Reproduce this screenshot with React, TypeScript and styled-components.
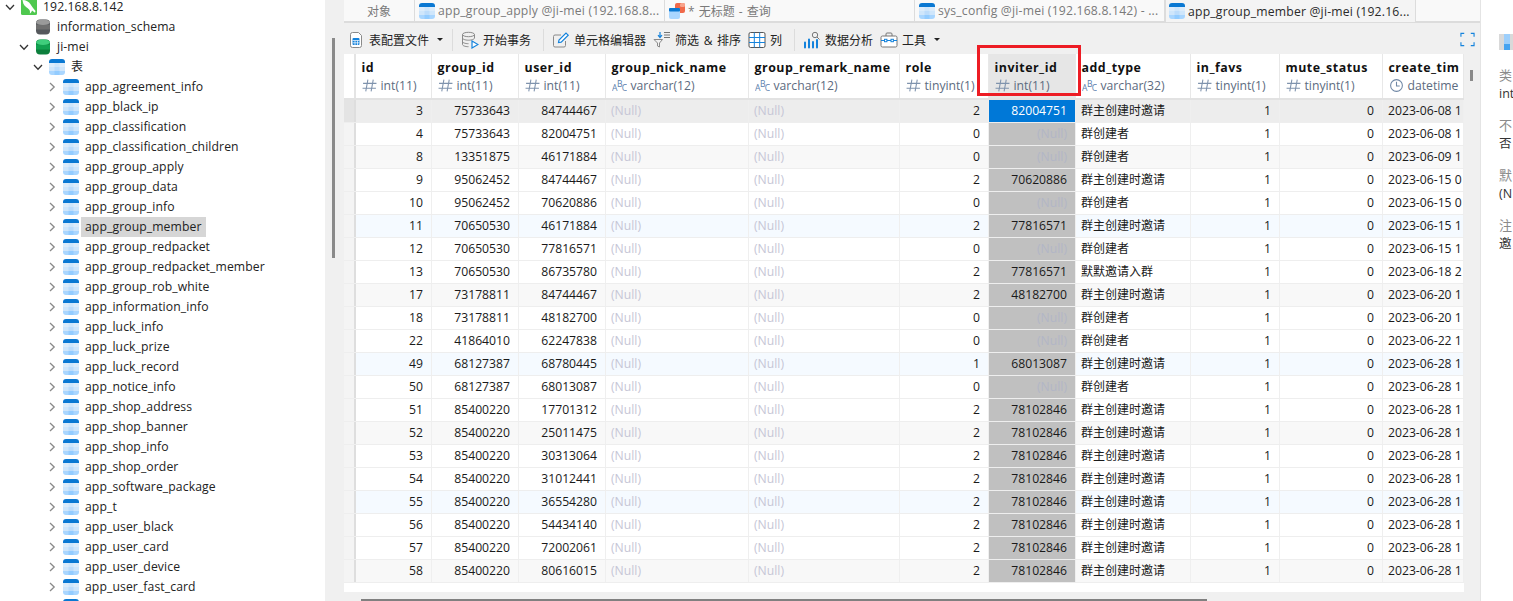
import React from "react";
import styled, { createGlobalStyle } from "styled-components";

const FONT = `"Open Sans", "Noto Sans", "Noto Sans CJK SC", sans-serif`;
const COLS = "12px 76px 87px 87px 143px 151px 89px 87px 115px 89px 103px 81px";

const Global = createGlobalStyle`
  html, body { margin: 0; padding: 0; height: 601px; overflow: hidden; background: #fff; }
  body { font-family: ${FONT}; font-size: 12.2px; color: #1a1a1a; }
`;

const Page = styled.div`
  display: flex;
  width: 1513px;
  height: 601px;
  overflow: hidden;
`;

/* ---------- sidebar ---------- */
const Sidebar = styled.nav`
  width: 325px;
  height: 601px;
  overflow: hidden;
  flex: none;
  background: #fff;
`;
const Tree = styled.ul`
  list-style: none;
  margin: -3px 0 0;
  padding: 0;
`;
const TreeRow = styled.li<{ $depth: number }>`
  display: flex;
  align-items: center;
  height: 20px;
  padding-left: ${(p) => 5 + p.$depth * 14}px;
  color: #222;
  white-space: nowrap;
  letter-spacing: 0.1px;
`;
const Chevron = styled.svg`
  width: 10px;
  height: 10px;
  flex: none;
  margin-right: 6px;
`;
const NoChevron = styled.span`
  width: 16px;
  flex: none;
`;
const NodeIcon = styled.svg`
  width: 16px;
  height: 16px;
  flex: none;
`;
const NodeLabel = styled.span<{ $selected?: boolean }>`
  margin-left: 2px;
  padding: 0 4px;
  height: 20px;
  line-height: 19px;
  background: ${(p) => (p.$selected ? "#d6d6d6" : "transparent")};
`;
const CjkLabel = styled.span`
  font-size: 12px;
`;
const SideGutter = styled.div`
  width: 19px;
  flex: none;
  background: #f0f0f0;
  padding: 38px 0 0 7px;
  box-sizing: border-box;
`;
const SideThumb = styled.div`
  width: 3px;
  height: 220px;
  background: #8a8a8a;
`;

/* ---------- main ---------- */
const Main = styled.main`
  width: 1136px;
  flex: none;
  display: flex;
  flex-direction: column;
  background: #f0f0f0;
`;
const TabBar = styled.div`
  display: flex;
  height: 23px;
  box-sizing: border-box;
  background: #f9f9f9;
  border-bottom: 2px solid #dcdcdc;
  flex: none;
`;
const Tab = styled.div<{ $w: number; $active?: boolean; $plain?: boolean }>`
  width: ${(p) => p.$w}px;
  height: ${(p) => (p.$active ? 22 : 21)}px;
  flex: none;
  box-sizing: border-box;
  display: flex;
  align-items: center;
  justify-content: ${(p) => (p.$plain ? "center" : "flex-start")};
  gap: 3px;
  padding-left: ${(p) => (p.$plain ? 0 : p.$active ? 3 : 4)}px;
  border-right: 1px solid #dcdcdc;
  white-space: nowrap;
  overflow: hidden;
  color: ${(p) => (p.$active ? "#2a2a2a" : "#7a7a7a")};
  background: ${(p) => (p.$active ? "#f4f4f4" : "transparent")};
  ${(p) => (p.$active ? "border-left: 1px solid #dcdcdc;" : "")}
  letter-spacing: 0.2px;
`;
const TabCjk = styled.span`
  font-size: 12px;
  letter-spacing: 0;
  word-spacing: 1px;
`;
const Toolbar = styled.div`
  height: 31px;
  flex: none;
  display: flex;
  align-items: center;
  padding: 2px 5px 0 3px;
  box-sizing: border-box;
  font-size: 12px;
  color: #222;
`;
const Tool = styled.div<{ $ml?: number }>`
  display: flex;
  align-items: center;
  gap: 4px;
  margin-left: ${(p) => p.$ml ?? 0}px;
  white-space: nowrap;
`;
const WideWords = styled.span`
  word-spacing: 1.5px;
`;
const Caret = styled.span`
  width: 0;
  height: 0;
  margin-left: 4px;
  border-left: 3px solid transparent;
  border-right: 3px solid transparent;
  border-top: 3px solid #222;
`;
const Sep = styled.div<{ $ml: number }>`
  width: 1px;
  height: 22px;
  margin-left: ${(p) => p.$ml}px;
  background: #dcdcdc;
`;
const ToolIcon = styled.svg`
  width: 18px;
  height: 18px;
  flex: none;
`;
const Expand = styled.svg`
  width: 15px;
  height: 15px;
  margin-left: auto;
`;

const GridRegion = styled.div`
  display: flex;
  height: 538px;
  flex: none;
`;
const Grid = styled.div`
  width: 1120px;
  background: #fff;
  flex: none;
  overflow: hidden;
`;
const VGutter = styled.div`
  width: 16px;
  flex: none;
  padding: 16px 0 0 6px;
  box-sizing: border-box;
`;
const VThumb = styled.div`
  width: 3px;
  height: 11px;
  background: #8a8a8a;
`;
const HeaderRow = styled.div`
  display: grid;
  grid-template-columns: ${COLS};
  height: 46px;
  box-sizing: border-box;
  border-bottom: 2px solid #e2e2e2;
`;
const HeaderCell = styled.div<{ $active?: boolean }>`
  box-sizing: border-box;
  padding: 5.5px 0 0 5.5px;
  border-right: 1px solid #e8e8e8;
  overflow: hidden;
  white-space: nowrap;
  background: ${(p) => (p.$active ? "#e6e6e6" : "#fff")};
`;
const Corner = styled.div`
  border-right: 2px solid #e4e4e4;
  background: #fff;
`;
const ColName = styled.div`
  font-weight: 700;
  font-size: 12.4px;
  line-height: 16px;
  color: #111;
  letter-spacing: 0.5px;
`;
const ColType = styled.div`
  display: flex;
  align-items: center;
  gap: 4px;
  height: 20px;
  color: #5d6b80;
  font-size: 12.2px;
`;
const TypeIcon = styled.svg`
  width: 15px;
  height: 15px;
  flex: none;
`;
const BodyRow = styled.div<{ $tone: string }>`
  display: grid;
  grid-template-columns: ${COLS};
  height: 23px;
  box-sizing: border-box;
  border-bottom: 1px solid #eeeeee;
  background: ${(p) => p.$tone};
`;
const Indicator = styled.div<{ $on?: boolean }>`
  background: ${(p) => (p.$on ? "#e4e4e4" : "#f4f4f4")};
  border-right: 2px solid #dedede;
`;
const Cell = styled.div<{ $right?: boolean; $mode?: "hl" | "sel" }>`
  box-sizing: border-box;
  line-height: 21px;
  height: 22px;
  padding: ${(p) => (p.$right ? "0 8px 0 0" : "0 0 0 5px")};
  text-align: ${(p) => (p.$right ? "right" : "left")};
  border-right: 1px solid #efefef;
  overflow: hidden;
  white-space: nowrap;
  color: ${(p) => (p.$mode === "sel" ? "#fff" : "#1a1a1a")};
  background: ${(p) =>
    p.$mode === "sel" ? "#0078d7" : p.$mode === "hl" ? "#c0c0c0" : "transparent"};
`;
const CjkCell = styled(Cell)`
  font-size: 12px;
`;
const NullText = styled.span<{ $hl?: boolean }>`
  color: ${(p) => (p.$hl ? "#b2b6c6" : "#c6c6d6")};
`;
const HTrack = styled.div`
  flex: 1;
  padding: 7px 0 0 17px;
`;
const HThumb = styled.div`
  width: 846px;
  height: 3px;
  background: #808080;
`;

/* ---------- right panel ---------- */
const Info = styled.aside`
  width: 33px;
  flex: none;
  overflow: hidden;
  background: #fff;
  border-left: 1px solid #e4e4e4;
  box-sizing: border-box;
  padding: 34px 0 0 18px;
  white-space: nowrap;
  font-size: 12.5px;
`;
const InfoIcon = styled.svg`
  width: 16px;
  height: 16px;
  display: block;
  margin-bottom: 15px;
`;
const InfoGroup = styled.div`
  margin-bottom: 12px;
`;
const InfoKey = styled.div`
  color: #8a8a8a;
  line-height: 20px;
  font-size: 13px;
`;
const InfoVal = styled.div`
  color: #333;
  line-height: 18px;
`;

const Annotation = styled.div`
  position: absolute;
  left: 977px;
  top: 45px;
  width: 104px;
  height: 51px;
  box-sizing: border-box;
  border: 3px solid #ed1c24;
  pointer-events: none;
`;

/* ---------- drawings ---------- */
const TableGlyph = () => (
  <NodeIcon viewBox="0 0 16 16">
    <defs>
      <clipPath id="tbl-clip">
        <rect x="0" y="0" width="16" height="16" rx="3" />
      </clipPath>
    </defs>
    <g clipPath="url(#tbl-clip)">
      <rect width="16" height="4" fill="#0a78d2" />
      <rect y="4" width="16" height="4" fill="#dcecfb" />
      <rect x="5.500" y="4" width="5" height="4" fill="#cfe6fb" />
      <rect y="8" width="16" height="4" fill="#cfe6fb" />
      <rect x="5.500" y="8" width="5" height="4" fill="#bcdcfb" />
      <rect y="12" width="16" height="4" fill="#a9d6ff" />
      <rect x="5.500" y="12" width="5" height="4" fill="#93ccff" />
    </g>
  </NodeIcon>
);

const Db = ({ a, b, c }: { a: string; b: string; c: string }) => (
  <NodeIcon viewBox="0 0 16 16">
    <rect x="1" y="0.500" width="14" height="15" rx="4" fill={c} />
    <rect x="1" y="5.500" width="14" height="5" fill={b} />
    <ellipse cx="8" cy="3.300" rx="7" ry="2.800" fill={a} />
  </NodeIcon>
);

const Mysql = () => (
  <NodeIcon viewBox="0 0 16 16">
    <rect width="16" height="16" rx="1.500" fill="#4fc84f" />
    <path
      d="M1.500 1c3.500.2 6.500 1.500 8 4.200 1 1.800 2.200 3.500 5 6.800l-.5 1.700-3-2.200c-.4 1.300-1 2.200-2.200 3 .4-1.500.2-2.700-.5-3.800C6.500 8.800 3.500 7.500 2.300 4.500Z"
      fill="#fff"
    />
  </NodeIcon>
);

const Chev = ({ open }: { open?: boolean }) => (
  <Chevron viewBox="0 0 10 10">
    {open ? (
      <path d="M1 3 5 7.200 9 3" fill="none" stroke="#333" strokeWidth="1.300" />
    ) : (
      <path d="M3 1 7.200 5 3 9" fill="none" stroke="#8a8a8a" strokeWidth="1.300" />
    )}
  </Chevron>
);

const Hash = () => (
  <TypeIcon viewBox="0 0 14 14">
    <path
      d="M5.500 1.500 3.500 12.500M10.500 1.500 8.500 12.500M1 5h12.500M.5 9.500h12.500"
      stroke="#7f93ad"
      strokeWidth="1"
      fill="none"
    />
  </TypeIcon>
);
const Abc = () => (
  <TypeIcon viewBox="0 0 14 14">
    <text x="0" y="12.500" fontSize="8" fill="#5a80ad" fontFamily="Open Sans">A</text>
    <text x="4.600" y="8.500" fontSize="8" fill="#5a80ad" fontFamily="Open Sans">B</text>
    <text x="9" y="12.500" fontSize="8" fill="#5a80ad" fontFamily="Open Sans">C</text>
  </TypeIcon>
);
const Clock = () => (
  <TypeIcon viewBox="0 0 14 14">
    <circle cx="7" cy="7" r="5.500" stroke="#6f87a5" fill="none" />
    <path d="M7 3.500V7.500H10" stroke="#6f87a5" fill="none" />
  </TypeIcon>
);

const FileIco = () => (
  <ToolIcon viewBox="0 0 18 18">
    <path d="M3.500 3.500a2 2 0 0 1 2-2h6l3 3v10a2 2 0 0 1-2 2h-7a2 2 0 0 1-2-2Z" fill="#fff" stroke="#8a8a8a" />
    <rect x="5.500" y="7" width="7" height="7" rx="1" fill="#1583dc" />
    <path d="M5.500 9.500h7M8 9.500V14M10.500 9.500V14M5.500 11.800h7" stroke="#fff" strokeWidth=".7" />
  </ToolIcon>
);
const TxnIco = () => (
  <ToolIcon viewBox="0 0 18 18">
    <ellipse cx="7.500" cy="3.500" rx="6" ry="2.200" fill="none" stroke="#8a8a8a" />
    <path d="M1.500 3.500v10c0 1.200 2.700 2.200 6 2.200M1.500 7c0 1.200 2.700 2.200 6 2.200s6-1 6-2.200V3.500M1.500 10.500c0 1.200 2.700 2.200 6 2.200" fill="none" stroke="#8a8a8a" />
    <path d="M11 10l6 3.500-6 3.500Z" fill="#fff" stroke="#1583dc" strokeWidth="1.200" />
  </ToolIcon>
);
const EditIco = () => (
  <ToolIcon viewBox="0 0 18 18">
    <path d="M9 4H3a1.500 1.500 0 0 0-1.500 1.500v9A1.500 1.500 0 0 0 3 16h9a1.500 1.500 0 0 0 1.500-1.500V10" fill="none" stroke="#8a8a8a" />
    <path d="M6.500 11.500 7 9l7-7 2.200 2.200-7 7Z" fill="#fff" stroke="#1583dc" strokeWidth="1.200" />
  </ToolIcon>
);
const FilterIco = () => (
  <ToolIcon viewBox="0 0 18 18">
    <path d="M1 8.500h8.500L6.500 12v4l-2-1v-3Z" fill="none" stroke="#8a8a8a" />
    <path d="M7 1v5M5 4.200 7 6.500l2-2.300" fill="none" stroke="#1583dc" strokeWidth="1.200" />
    <path d="M11 1.500h6M11 4h6M11 6.500h6" stroke="#666" strokeWidth=".9" />
  </ToolIcon>
);
const ColsIco = () => (
  <ToolIcon viewBox="0 0 18 18">
    <rect x="1" y="1.500" width="16" height="15" rx="1.500" fill="#fff" stroke="#555" />
    <path d="M6.300 1.500v15M11.700 1.500v15M1 6.500h16M1 11.500h16" stroke="#1583dc" />
  </ToolIcon>
);
const ChartIco = () => (
  <ToolIcon viewBox="0 0 18 18">
    <path d="M2 11.500v5M6 8.500v8M10 11v5.500M14 9v7.500" stroke="#1583dc" strokeWidth="2" strokeLinecap="round" fill="none" />
    <circle cx="12" cy="4" r="2.700" fill="none" stroke="#777" />
    <path d="M14 6l2.500 2.500" stroke="#777" />
  </ToolIcon>
);
const ToolsIco = () => (
  <ToolIcon viewBox="0 0 18 18">
    <rect x="1" y="5" width="16" height="11" rx="1.500" fill="#fff" stroke="#777" />
    <path d="M6 5V3a1 1 0 0 1 1-1h4a1 1 0 0 1 1 1v2" fill="none" stroke="#777" />
    <path d="M1 9.500h16" stroke="#1583dc" />
    <rect x="4.500" y="8.300" width="2.400" height="2.400" fill="#fff" stroke="#1583dc" />
    <rect x="11" y="8.300" width="2.400" height="2.400" fill="#fff" stroke="#1583dc" />
  </ToolIcon>
);
const QueryIco = () => (
  <NodeIcon viewBox="0 0 16 16">
    <rect x="6" y="0" width="10" height="10" rx="2" fill="#f0694a" />
    <rect x="11" y="0" width="5" height="4" rx="1.500" fill="#f8a48c" />
    <rect x="0" y="5" width="11" height="11" rx="2" fill="#a9d6ff" />
    <rect x="0" y="5" width="11" height="3.500" rx="1" fill="#0a78d2" />
  </NodeIcon>
);

/* ---------- data ---------- */
const tables = [
  "app_agreement_info", "app_black_ip", "app_classification", "app_classification_children",
  "app_group_apply", "app_group_data", "app_group_info", "app_group_member", "app_group_redpacket",
  "app_group_redpacket_member", "app_group_rob_white", "app_information_info", "app_luck_info",
  "app_luck_prize", "app_luck_record", "app_notice_info", "app_shop_address", "app_shop_banner",
  "app_shop_info", "app_shop_order", "app_software_package", "app_t", "app_user_black",
  "app_user_card", "app_user_device", "app_user_fast_card", "",
];

const A = "群主创建时邀请";
const B = "群创建者";
const rows: [number, string, string, number, string | null, string, string][] = [
  [3, "75733643", "84744467", 2, "82004751", A, "2023-06-08 1"],
  [4, "75733643", "82004751", 0, null, B, "2023-06-08 1"],
  [8, "13351875", "46171884", 0, null, B, "2023-06-09 1"],
  [9, "95062452", "84744467", 2, "70620886", A, "2023-06-15 0"],
  [10, "95062452", "70620886", 0, null, B, "2023-06-15 0"],
  [11, "70650530", "46171884", 2, "77816571", A, "2023-06-15 1"],
  [12, "70650530", "77816571", 0, null, B, "2023-06-15 1"],
  [13, "70650530", "86735780", 2, "77816571", "默默邀请入群", "2023-06-18 2"],
  [17, "73178811", "84744467", 2, "48182700", A, "2023-06-20 1"],
  [18, "73178811", "48182700", 0, null, B, "2023-06-20 1"],
  [22, "41864010", "62247838", 0, null, B, "2023-06-22 1"],
  [49, "68127387", "68780445", 1, "68013087", A, "2023-06-28 1"],
  [50, "68127387", "68013087", 0, null, B, "2023-06-28 1"],
  [51, "85400220", "17701312", 2, "78102846", A, "2023-06-28 1"],
  [52, "85400220", "25011475", 2, "78102846", A, "2023-06-28 1"],
  [53, "85400220", "30313064", 2, "78102846", A, "2023-06-28 1"],
  [54, "85400220", "31012441", 2, "78102846", A, "2023-06-28 1"],
  [55, "85400220", "36554280", 2, "78102846", A, "2023-06-28 1"],
  [56, "85400220", "54434140", 2, "78102846", A, "2023-06-28 1"],
  [57, "85400220", "72002061", 2, "78102846", A, "2023-06-28 1"],
  [58, "85400220", "80616015", 2, "78102846", A, "2023-06-28 1"],
];

const columns: [string, string, "n" | "s" | "d"][] = [
  ["id", "int(11)", "n"],
  ["group_id", "int(11)", "n"],
  ["user_id", "int(11)", "n"],
  ["group_nick_name", "varchar(12)", "s"],
  ["group_remark_name", "varchar(12)", "s"],
  ["role", "tinyint(1)", "n"],
  ["inviter_id", "int(11)", "n"],
  ["add_type", "varchar(32)", "s"],
  ["in_favs", "tinyint(1)", "n"],
  ["mute_status", "tinyint(1)", "n"],
  ["create_tim", "datetime", "d"],
];

const tone = (i: number) => {
  if (i === 0) return "#ededed";
  if (i % 6 === 5) return "#f5faff";
  if (i % 6 === 2) return "#f8f8f8";
  return "#ffffff";
};

export default function App() {
  return (
    <Page>
      <Global />
      <Sidebar>
        <Tree>
          <TreeRow $depth={0}>
            <Chev open />
            <Mysql />
            <NodeLabel>192.168.8.142</NodeLabel>
          </TreeRow>
          <TreeRow $depth={1}>
            <NoChevron />
            <Db a="#9a9a9a" b="#6f6f6f" c="#55585c" />
            <NodeLabel>information_schema</NodeLabel>
          </TreeRow>
          <TreeRow $depth={1}>
            <Chev open />
            <Db a="#3fce7c" b="#12a150" c="#0c7f3c" />
            <NodeLabel>ji-mei</NodeLabel>
          </TreeRow>
          <TreeRow $depth={2}>
            <Chev open />
            <TableGlyph />
            <NodeLabel>
              <CjkLabel>表</CjkLabel>
            </NodeLabel>
          </TreeRow>
          {tables.map((t, i) => (
            <TreeRow $depth={3} key={i}>
              {t ? <Chev /> : <NoChevron />}
              <TableGlyph />
              {t && <NodeLabel $selected={t === "app_group_member"}>{t}</NodeLabel>}
            </TreeRow>
          ))}
        </Tree>
      </Sidebar>
      <SideGutter>
        <SideThumb />
      </SideGutter>

      <Main>
        <TabBar>
          <Tab $w={71} $plain>
            <TabCjk>对象</TabCjk>
          </Tab>
          <Tab $w={250}>
            <TableGlyph />
            app_group_apply @ji-mei (192.168.8...
          </Tab>
          <Tab $w={250}>
            <QueryIco />
            <TabCjk>* 无标题 - 查询</TabCjk>
          </Tab>
          <Tab $w={250}>
            <TableGlyph />
            sys_config @ji-mei (192.168.8.142) - ...
          </Tab>
          <Tab $w={251} $active>
            <TableGlyph />
            app_group_member @ji-mei (192.16...
          </Tab>
        </TabBar>
        <Toolbar>
          <Tool>
            <FileIco />
            表配置文件
            <Caret />
          </Tool>
          <Sep $ml={9} />
          <Tool $ml={8}>
            <TxnIco />
            开始事务
          </Tool>
          <Sep $ml={12} />
          <Tool $ml={8}>
            <EditIco />
            单元格编辑器
          </Tool>
          <Tool $ml={7}>
            <FilterIco />
            <WideWords>筛选 &amp; 排序</WideWords>
          </Tool>
          <Tool $ml={7}>
            <ColsIco />
            列
          </Tool>
          <Sep $ml={12} />
          <Tool $ml={8}>
            <ChartIco />
            数据分析
          </Tool>
          <Tool $ml={7}>
            <ToolsIco />
            工具
            <Caret />
          </Tool>
          <Expand viewBox="0 0 16 16">
            <path
              d="M1 5V1.500h3.500M11.500 1.500H15V5M15 11v3.500h-3.500M4.500 14.500H1V11"
              fill="none"
              stroke="#1583dc"
              strokeWidth="1.200"
            />
          </Expand>
        </Toolbar>
        <GridRegion>
          <Grid>
            <HeaderRow>
              <Corner />
              {columns.map(([name, type, kind]) => (
                <HeaderCell key={name} $active={name === "inviter_id"}>
                  <ColName>{name}</ColName>
                  <ColType>
                    {kind === "n" ? <Hash /> : kind === "s" ? <Abc /> : <Clock />}
                    {type}
                  </ColType>
                </HeaderCell>
              ))}
            </HeaderRow>
            {rows.map((r, i) => (
              <BodyRow key={r[0]} $tone={tone(i)}>
                <Indicator $on={i === 0} />
                <Cell $right>{r[0]}</Cell>
                <Cell $right>{r[1]}</Cell>
                <Cell $right>{r[2]}</Cell>
                <Cell>
                  <NullText>(Null)</NullText>
                </Cell>
                <Cell>
                  <NullText>(Null)</NullText>
                </Cell>
                <Cell $right>{r[3]}</Cell>
                <Cell $right $mode={i === 0 ? "sel" : "hl"}>
                  {r[4] ?? <NullText $hl>(Null)</NullText>}
                </Cell>
                <CjkCell>{r[5]}</CjkCell>
                <Cell $right>1</Cell>
                <Cell $right>0</Cell>
                <Cell>{r[6]}</Cell>
              </BodyRow>
            ))}
          </Grid>
          <VGutter>
            <VThumb />
          </VGutter>
        </GridRegion>
        <HTrack>
          <HThumb />
        </HTrack>
      </Main>

      <Info>
        <InfoIcon viewBox="0 0 16 16">
          <rect width="16" height="16" fill="#d9d9d9" />
          <rect x="5" width="6" height="16" fill="#9dcffb" />
          <rect x="5" y="10" width="6" height="6" fill="#45a3f0" />
        </InfoIcon>
        <InfoGroup>
          <InfoKey>类</InfoKey>
          <InfoVal>int</InfoVal>
        </InfoGroup>
        <InfoGroup>
          <InfoKey>不</InfoKey>
          <InfoVal>否</InfoVal>
        </InfoGroup>
        <InfoGroup>
          <InfoKey>默</InfoKey>
          <InfoVal>(N</InfoVal>
        </InfoGroup>
        <InfoGroup>
          <InfoKey>注</InfoKey>
          <InfoVal>邀</InfoVal>
        </InfoGroup>
      </Info>
      <Annotation />
    </Page>
  );
}
